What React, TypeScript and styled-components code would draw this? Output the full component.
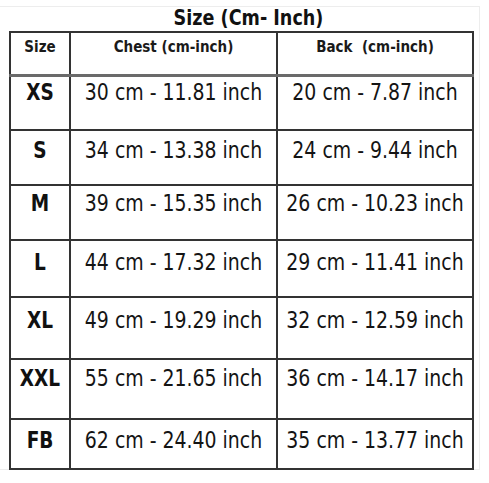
import React from "react";
import styled, { createGlobalStyle } from "styled-components";

const GlobalStyle = createGlobalStyle`
  html, body {
    margin: 0;
    padding: 0;
    background: #ffffff;
  }
  body {
    width: 489px;
    height: 483px;
    overflow: hidden;
    font-family: "DejaVu Sans", "Liberation Sans", sans-serif;
    color: #141414;
  }
`;

type Row = {
  size: string;
  chest: string;
  back: string;
  h: number;
  pad: number;
};

const rows: Row[] = [
  { size: "XS", chest: "30 cm - 11.81 inch", back: "20 cm - 7.87 inch", h: 55, pad: 4 },
  { size: "S", chest: "34 cm - 13.38 inch", back: "24 cm - 9.44 inch", h: 55, pad: 8 },
  { size: "M", chest: "39 cm - 15.35 inch", back: "26 cm - 10.23 inch", h: 55, pad: 6 },
  { size: "L", chest: "44 cm - 17.32 inch", back: "29 cm - 11.41 inch", h: 57, pad: 10 },
  { size: "XL", chest: "49 cm - 19.29 inch", back: "32 cm - 12.59 inch", h: 62, pad: 11 },
  { size: "XXL", chest: "55 cm - 21.65 inch", back: "36 cm - 14.17 inch", h: 60, pad: 7 },
  { size: "FB", chest: "62 cm - 24.40 inch", back: "35 cm - 13.77 inch", h: 50, pad: 9 },
];

export default function App() {
  return (
    <>
      <GlobalStyle />
      <Frame>
        <Title>
          <Stretch>Size (Cm- Inch)</Stretch>
        </Title>
        <ChartTable>
          <colgroup>
            <col style={{ width: 60 }} />
            <col style={{ width: 207 }} />
            <col style={{ width: 196 }} />
          </colgroup>
          <thead>
            <tr>
              <HeadCell>
                <Stretch>Size</Stretch>
              </HeadCell>
              <HeadCell>
                <Stretch>Chest (cm-inch)</Stretch>
              </HeadCell>
              <HeadCell>
                <Stretch>Back&nbsp; (cm-inch)</Stretch>
              </HeadCell>
            </tr>
          </thead>
          <tbody>
            {rows.map((r) => (
              <tr key={r.size}>
                <SizeCell $h={r.h} $pad={r.pad}>
                  <Stretch>{r.size}</Stretch>
                </SizeCell>
                <ValueCell $h={r.h} $pad={r.pad}>
                  <Stretch>{r.chest}</Stretch>
                </ValueCell>
                <ValueCell $h={r.h} $pad={r.pad}>
                  <Stretch>{r.back}</Stretch>
                </ValueCell>
              </tr>
            ))}
          </tbody>
        </ChartTable>
      </Frame>
    </>
  );
}

// --- Styles ---

const Frame = styled.div`
  margin-top: 6px;
  width: 480px;
  height: 464px;
  box-sizing: border-box;
  border: 1px solid #ededed;
  border-left: none;
`;

const Title = styled.div`
  width: 463px;
  margin-left: 9px;
  padding-left: 16px;
  box-sizing: border-box;
  padding-top: 2px;
  height: 24px;
  text-align: center;
  font-weight: 700;
  font-size: 17.6px;
  line-height: 1;
  color: #111;
`;

const Stretch = styled.span`
  display: inline-block;
  transform: scaleY(1.17);
  transform-origin: 50% 0;
  white-space: nowrap;
`;

const ChartTable = styled.table`
  margin-left: 9px;
  width: 463px;
  border-collapse: collapse;
  table-layout: fixed;
  border: 2px solid #333;

  td,
  th {
    border: 2px solid #333;
    padding: 0;
    text-align: center;
    vertical-align: top;
  }

  thead th {
    border-bottom: 3px solid #6a6a6a;
  }
`;

const HeadCell = styled.th`
  height: 43px;
  box-sizing: border-box;
  padding-top: 6px !important;
  font-size: 13.5px;
  font-weight: 700;
  line-height: 1;
  color: #1a1a1a;

  ${Stretch} {
    transform: scaleY(1.2);
  }
`;

const SizeCell = styled.td<{ $h: number; $pad: number }>`
  height: ${(p) => p.$h}px;
  box-sizing: border-box;
  padding-top: ${(p) => p.$pad}px !important;
  font-size: 18.5px;
  font-weight: 700;
  line-height: 1;
  color: #111;

  ${Stretch} {
    transform: scaleY(1.25);
  }
`;

const ValueCell = styled.td<{ $h: number; $pad: number }>`
  height: ${(p) => p.$h}px;
  box-sizing: border-box;
  padding-top: ${(p) => p.$pad}px !important;
  font-family: "DejaVu Sans Condensed", "DejaVu Sans", sans-serif;
  font-stretch: condensed;
  font-size: 21px;
  font-weight: 400;
  line-height: 1;
  color: #141414;

  ${Stretch} {
    transform: scaleY(1.11);
  }
`;
